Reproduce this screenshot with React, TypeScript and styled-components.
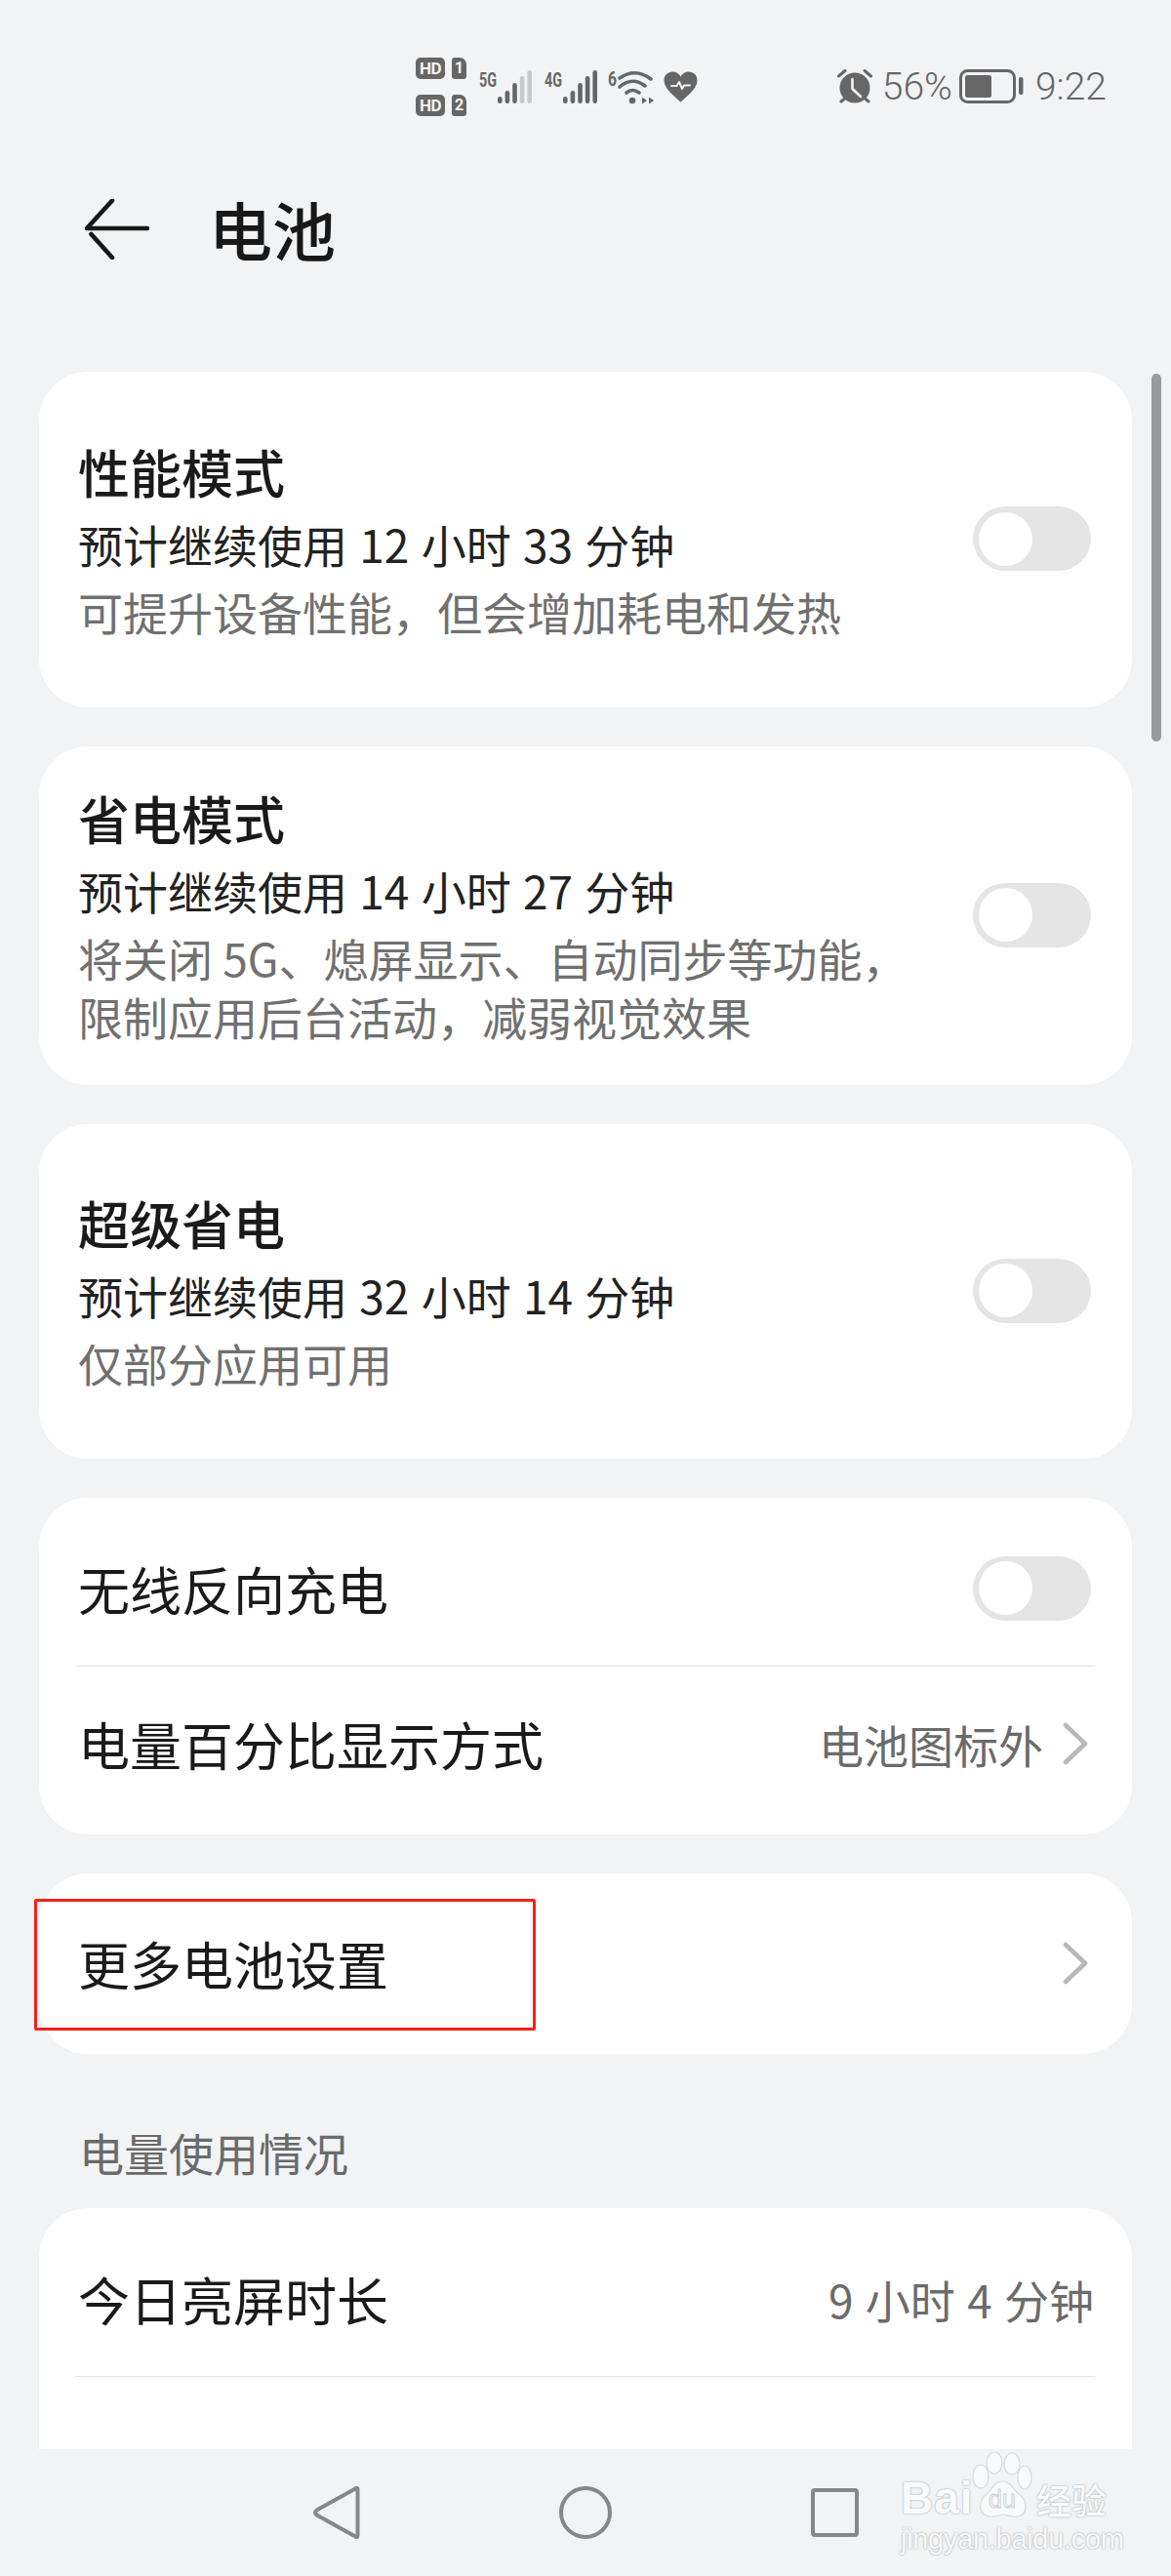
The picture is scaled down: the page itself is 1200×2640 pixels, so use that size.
import { FC } from "react"
import styled, { createGlobalStyle } from "styled-components"

const GlobalStyle = createGlobalStyle`
  html, body {
    margin: 0;
    padding: 0;
    background: #f1f3f5;
  }
  * {
    box-sizing: border-box;
  }
`

const cjk = `"Noto Sans CJK SC", "Noto Sans", sans-serif`

const Signal: FC<{ label: string; lit: number; labelX: number; width: number; barsX: number }> = ({
  label,
  lit,
  labelX,
  width,
  barsX,
}) => {
  const heights = [7, 13, 21, 28, 34]
  return (
    <svg width={width} height={42} viewBox={`0 -4 ${width} 42`}>
      <text
        x={labelX}
        y={17}
        fontFamily="Roboto, sans-serif"
        fontWeight={700}
        fontSize={21}
        fill="#666"
        textLength={18}
        lengthAdjust="spacingAndGlyphs"
      >
        {label}
      </text>
      {heights.map((h, i) => (
        <rect
          key={i}
          x={barsX + i * 7.6}
          y={34 - h}
          width={4.6}
          height={h}
          rx={2.3}
          fill={i < lit ? "#666" : "#c9c9c9"}
        />
      ))}
    </svg>
  )
}

const Wifi: FC = () => (
  <svg width={47} height={42} viewBox="0 -4 47 42" style={{ overflow: "visible" }}>
    <text
      x={0}
      y={16}
      fontFamily="Roboto, sans-serif"
      fontWeight={700}
      fontSize={21}
      fill="#666"
      textLength={9}
      lengthAdjust="spacingAndGlyphs"
    >
      6
    </text>
    <g fill="none" stroke="#666" strokeWidth={3.6} strokeLinecap="round">
      <path d="M12 8 Q28 -3 44 9" />
      <path d="M12 17 Q25 6 38 16" />
      <path d="M19 23 Q25 18 32 23" />
    </g>
    <circle cx={25} cy={31} r={3.3} fill="#666" />
    <path d="M40 31 L35 27.5 V34.5 Z M42 27.5 L47 31 L42 34.5 Z" fill="#666" />
  </svg>
)

const Heart: FC = () => (
  <svg width={35} height={32} viewBox="0 0 35 32">
    <path
      d="M17.5 31.5 C13 27 1 19 0.5 10 C0.2 4 4.5 0.5 9.5 0.5 C13 0.5 16 2.5 17.5 5.5 C19 2.5 22 0.5 25.5 0.5 C30.5 0.5 34.8 4 34.5 10 C34 19 22 27 17.5 31.5 Z"
      fill="#666"
    />
    <path
      d="M8 15 H13.5 L16 11 L19 18 L21 14.5 H27"
      fill="none"
      stroke="#f1f3f5"
      strokeWidth={2}
      strokeLinejoin="round"
      strokeLinecap="round"
    />
  </svg>
)

const Alarm: FC = () => (
  <svg width={36} height={36} viewBox="0 0 36 36">
    <circle cx={18} cy={19} r={15.5} fill="#666" />
    <path d="M1.5 7 L8 1.5 M34.5 7 L28 1.5 M4 33 L7.5 30 M32 33 L28.5 30" stroke="#666" strokeWidth={3} strokeLinecap="round" />
    <path d="M15.5 10 V20 L24 28" fill="none" stroke="#f1f3f5" strokeWidth={2.6} strokeLinecap="round" strokeLinejoin="round" />
  </svg>
)

const Battery: FC = () => (
  <svg width={66} height={35} viewBox="0 0 66 35">
    <rect x={1.5} y={1.5} width={55} height={32} rx={7} fill="none" stroke="#666" strokeWidth={3} />
    <rect x={6} y={6} width={27} height={23} rx={2.5} fill="#666" />
    <rect x={61} y={8} width={4.5} height={18} rx={2} fill="#666" />
  </svg>
)

const Row: FC<{ title: string; value?: string; chevron?: boolean; toggle?: boolean; right: number }> = ({
  title,
  value,
  chevron,
  toggle,
  right,
}) => (
  <RowBox $right={right}>
    <RowTitle>{title}</RowTitle>
    <RowRight>
      {value && <Value>{value}</Value>}
      {chevron && (
        <svg width={26} height={44} viewBox="0 0 26 44">
          <path d="M3 3 L23 22 L3 41" fill="none" stroke="#b8b8b8" strokeWidth={4.5} strokeLinecap="round" strokeLinejoin="round" />
        </svg>
      )}
      {toggle && <Toggle />}
    </RowRight>
  </RowBox>
)

const ModeCard: FC<{ title: string; sub: string; desc: string[] }> = ({ title, sub, desc }) => (
  <Mode>
    <div>
      <ModeTitle>{title}</ModeTitle>
      <ModeSub>{sub}</ModeSub>
      <ModeDesc>
        {desc.map((d) => (
          <div key={d}>{d}</div>
        ))}
      </ModeDesc>
    </div>
    <ModeToggle />
  </Mode>
)

const App: FC = () => {
  return (
    <Screen>
      <GlobalStyle />
      <StatusBar>
        <StatusLeft>
          <HdColumn>
            <HdLine>
              <HdBadge>HD</HdBadge>
              <SimBadge>1</SimBadge>
            </HdLine>
            <HdLine>
              <HdBadge>HD</HdBadge>
              <SimBadge>2</SimBadge>
            </HdLine>
          </HdColumn>
          <Signal label="5G" lit={3} labelX={3} width={58} barsX={22} />
          <Signal label="4G" lit={5} labelX={2} width={57} barsX={21} />
          <Wifi />
          <Heart />
        </StatusLeft>
        <StatusRight>
          <Alarm />
          <Percent>56%</Percent>
          <Battery />
          <Clock>9:22</Clock>
        </StatusRight>
      </StatusBar>

      <Header>
        <svg width={66} height={62} viewBox="0 0 66 62">
          <path
            d="M28 1.5 L2 30 H64 M6.5 36 L28 60"
            fill="none"
            stroke="#181818"
            strokeWidth={4.6}
            strokeLinecap="round"
            strokeLinejoin="round"
          />
        </svg>
        <PageTitle>电池</PageTitle>
      </Header>

      <Main>
        <ModeCard title="性能模式" sub="预计继续使用 12 小时 33 分钟" desc={["可提升设备性能，但会增加耗电和发热"]} />
        <ModeCard
          title="省电模式"
          sub="预计继续使用 14 小时 27 分钟"
          desc={["将关闭 5G、熄屏显示、自动同步等功能，", "限制应用后台活动，减弱视觉效果"]}
        />
        <ModeCard title="超级省电" sub="预计继续使用 32 小时 14 分钟" desc={["仅部分应用可用"]} />

        <ListCard>
          <Row title="无线反向充电" toggle right={42} />
          <Divider />
          <Row title="电量百分比显示方式" value="电池图标外" chevron right={45} />
        </ListCard>

        <ListCard>
          <Row title="更多电池设置" chevron right={45} />
          <Highlight />
        </ListCard>

        <SectionLabel>电量使用情况</SectionLabel>

        <LastCard>
          <Row title="今日亮屏时长" value="9 小时 4 分钟" right={39} />
          <Divider />
        </LastCard>

        <ScrollThumb />
      </Main>

      <NavBar>
        <svg width={48} height={54} viewBox="0 0 48 54">
          <path
            d="M45.5 3 C45.5 1.8 44 1.4 43.2 2.4 L3.5 24.5 C1.5 26 1.5 28 3.5 29.5 L43.2 51.6 C44 52.6 45.5 52.2 45.5 51 Z"
            fill="none"
            stroke="#878787"
            strokeWidth={4}
            strokeLinejoin="round"
          />
        </svg>
        <svg width={54} height={54} viewBox="0 0 54 54">
          <circle cx={27} cy={27} r={25} fill="none" stroke="#878787" strokeWidth={4} />
        </svg>
        <svg width={49} height={50} viewBox="0 0 49 50">
          <rect x={2} y={2} width={45} height={46} rx={2} fill="none" stroke="#878787" strokeWidth={4} />
        </svg>
        <Watermark>
          <BrandLine>
            <BrandText>Bai</BrandText>
            <Paw width={66} height={68} viewBox="0 0 66 68">
              <g fill="#f9fafb" stroke="#d9d9d9" strokeWidth={1.2}>
                <ellipse cx={11} cy={25} rx={8} ry={12} />
                <ellipse cx={25} cy={11} rx={8} ry={11} />
                <ellipse cx={43} cy={12} rx={8} ry={11} />
                <ellipse cx={56} cy={26} rx={7} ry={12} />
                <path d="M33 30 C25 30 23 38 17 43 C9 49 7 65 21 66 C27 67 30 64 34 64 C39 64 42 67 48 66 C60 65 59 49 50 43 C44 38 41 30 33 30 Z" />
              </g>
              <text x={33} y={57} textAnchor="middle" fontFamily="Liberation Sans, sans-serif" fontSize={25} fill="#f9fafb" stroke="#c8c8c8" strokeWidth={0.8}>
                du
              </text>
            </Paw>
            <BrandCjk>经验</BrandCjk>
          </BrandLine>
          <BrandUrl>jingyan.baidu.com</BrandUrl>
        </Watermark>
      </NavBar>
    </Screen>
  )
}
export default App

const Screen = styled.div`
  width: 1200px;
  height: 2640px;
  display: flex;
  flex-direction: column;
  overflow: hidden;
  background: #f1f3f5;
  font-family: ${cjk};
  color: #1a1a1a;
`

const StatusBar = styled.div`
  height: 118px;
  flex: none;
  padding: 59px 66px 0 426px;
  display: flex;
  align-items: center;
  justify-content: space-between;
`

const StatusLeft = styled.div`
  display: flex;
  align-items: center;
  gap: 10px;
`

const HdColumn = styled.div`
  display: flex;
  flex-direction: column;
  gap: 16px;
`

const HdLine = styled.div`
  display: flex;
  gap: 7px;
`

const HdBadge = styled.span`
  width: 30px;
  height: 22px;
  border-radius: 5px;
  background: #666;
  color: #f1f3f5;
  font: 700 17px/22px Roboto, sans-serif;
  letter-spacing: -0.5px;
  text-align: center;
`

const SimBadge = styled.span`
  width: 15px;
  height: 22px;
  border-radius: 3px 7px 3px 3px;
  background: #666;
  color: #f1f3f5;
  font: 700 16px/22px Roboto, sans-serif;
  text-align: center;
`

const StatusRight = styled.div`
  display: flex;
  align-items: center;
`

const Percent = styled.span`
  margin: 0 7px 0 10px;
  font: 300 39px/40px Roboto, sans-serif;
  color: #666;
`

const Clock = styled.span`
  margin-left: 12px;
  font: 300 39px/40px Roboto, sans-serif;
  color: #666;
`

const Header = styled.div`
  height: 234px;
  flex: none;
  padding-left: 87px;
  display: flex;
  align-items: center;
  gap: 61px;
`

const PageTitle = styled.h1`
  margin: 0;
  padding-bottom: 3px;
  font-size: 65px;
  font-weight: 500;
  line-height: 80px;
  color: #181818;
`

const Main = styled.div`
  position: relative;
  flex: 1;
  min-height: 0;
  overflow: hidden;
  padding: 29px 40px 0;
  display: flex;
  flex-direction: column;
  gap: 40px;
`

const Mode = styled.section`
  flex: none;
  min-height: 343.5px;
  padding: 36.5px 42px 40.5px 40px;
  border-radius: 50px;
  background: #fff;
  display: flex;
  align-items: center;
  justify-content: space-between;
`

const ModeTitle = styled.div`
  font-size: 53px;
  font-weight: 500;
  line-height: 74px;
  color: #1a1a1a;
`

const ModeSub = styled.div`
  font-size: 46px;
  line-height: 74px;
  word-spacing: 2px;
  color: #222;
`

const ModeDesc = styled.div`
  margin-top: 2px;
  font-size: 46px;
  line-height: 60px;
  color: #707070;
`

const Toggle = styled.span`
  flex: none;
  position: relative;
  display: block;
  width: 121px;
  height: 66px;
  border-radius: 33px;
  background: #e5e5e5;

  &::after {
    content: "";
    position: absolute;
    left: 6px;
    top: 5.5px;
    width: 55px;
    height: 55px;
    border-radius: 50%;
    background: #fff;
  }
`

const ModeToggle = styled(Toggle)`
  margin-top: 3px;
`

const ListCard = styled.section`
  position: relative;
  flex: none;
  padding: 14px 0;
  border-radius: 50px;
  background: #fff;
`

const LastCard = styled(ListCard)`
  margin-top: -40px;
  flex: 1;
  border-radius: 50px 50px 0 0;
`

const RowBox = styled.div<{ $right: number }>`
  height: 157.5px;
  padding: 0 ${(p) => p.$right}px 0 40px;
  display: flex;
  align-items: center;
  justify-content: space-between;
`

const RowTitle = styled.span`
  font-size: 53px;
  font-weight: 400;
  line-height: 70px;
  color: #1a1a1a;
`

const RowRight = styled.div`
  display: flex;
  align-items: center;
  gap: 20px;
`

const Value = styled.span`
  font-size: 46px;
  line-height: 60px;
  word-spacing: 2px;
  color: #6b6b6b;
`

const Divider = styled.div`
  height: 1.5px;
  margin: 0 38px 0 37px;
  background: #e3e3e3;
`

const Highlight = styled.div`
  position: absolute;
  left: -5px;
  top: 26px;
  width: 514px;
  height: 135px;
  border: 3px solid #f5201a;
  border-radius: 2px;
`

const SectionLabel = styled.div`
  flex: none;
  margin-top: -40px;
  padding: 66px 0 24px 41px;
  font-size: 46px;
  line-height: 68px;
  color: #6a6a6a;
`

const ScrollThumb = styled.div`
  position: absolute;
  left: 1180px;
  top: 31px;
  width: 10px;
  height: 377px;
  border-radius: 5px;
  background: #98999b;
`

const NavBar = styled.nav`
  position: relative;
  height: 130px;
  flex: none;
  padding-left: 321px;
  display: flex;
  align-items: center;
  gap: 204px;
  background: #f1f3f5;
`

const Watermark = styled.div`
  position: absolute;
  left: 923px;
  top: 3px;
  width: 214px;
  display: flex;
  flex-direction: column;
`

const BrandLine = styled.div`
  display: flex;
  align-items: flex-end;
  height: 68px;
`

const BrandText = styled.span`
  width: 71px;
  font: 700 46px/42px "Liberation Sans", sans-serif;
  letter-spacing: 1px;
  color: #f9fafb;
  text-shadow: 0 0 2px rgba(0, 0, 0, 0.4);
`

const Paw = styled.svg`
  flex: none;
`

const BrandCjk = styled.span`
  margin-left: 2px;
  font: 500 36px/40px ${cjk};
  color: #f9fafb;
  text-shadow: 0 0 2px rgba(0, 0, 0, 0.4);
`

const BrandUrl = styled.span`
  margin-top: 6px;
  font: 400 29px/30px "Liberation Sans", sans-serif;
  letter-spacing: -0.3px;
  white-space: nowrap;
  color: #f9fafb;
  text-shadow: 0 0 2px rgba(0, 0, 0, 0.4);
`
